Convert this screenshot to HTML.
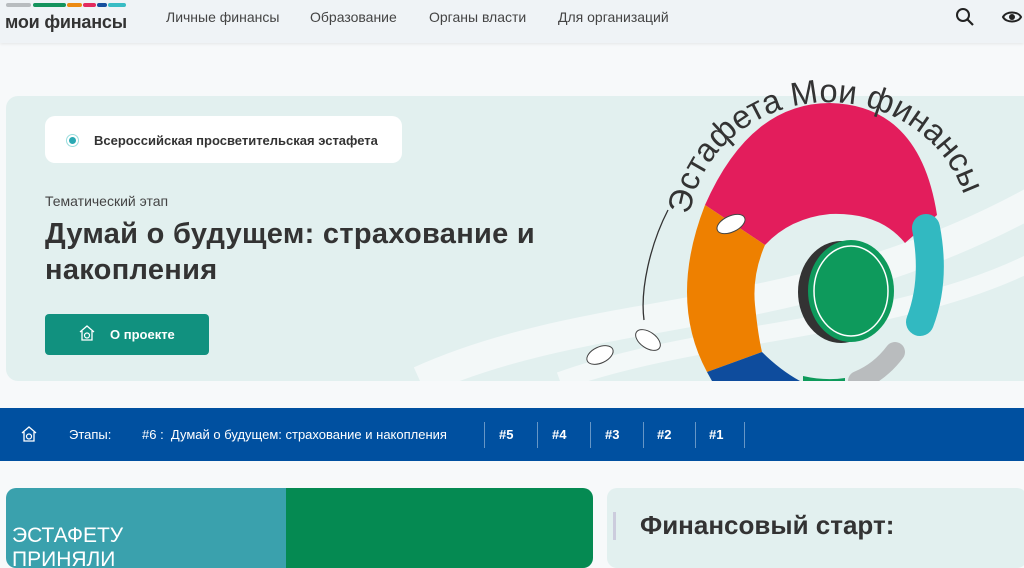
<!DOCTYPE html>
<html><head><meta charset="utf-8"><style>
*{margin:0;padding:0;box-sizing:border-box}
body{width:1024px;height:554px;overflow:hidden;background:#f7f9fa;font-family:"Liberation Sans","DejaVu Sans",sans-serif;position:relative;color:#333}
.hdr{position:absolute;left:0;top:0;width:1024px;height:43px;background:#eff3f6;box-shadow:0 1px 3px rgba(0,0,0,.08)}
.bar{position:absolute;top:3px;height:4px;border-radius:2px}
.logo{position:absolute;left:5px;top:12px;font-size:18px;font-weight:bold;color:#333;letter-spacing:-.2px}
.nav{position:absolute;top:9px;font-size:14px;color:#444}
.card{position:absolute;left:6px;top:96px;width:1030px;height:285px;background:#e2f0ef;border-radius:12px;overflow:hidden}
.pill{position:absolute;left:45px;top:116px;width:357px;height:47px;background:#fff;border-radius:10px}
.blue{position:absolute;left:0;top:408px;width:1024px;height:53px;background:#0050a0;color:#fff;font-size:13px}
.blue span{position:absolute;top:19px}
.sep{position:absolute;top:14px;width:1px;height:26px;background:rgba(255,255,255,.4)}
</style></head><body>
<div class="hdr">
<div class="bar" style="left:6px;width:25px;background:#b8bcbf"></div>
<div class="bar" style="left:33px;width:33px;background:#14935d"></div>
<div class="bar" style="left:67px;width:15px;background:#ec8a12"></div>
<div class="bar" style="left:83px;width:13px;background:#e32a5e"></div>
<div class="bar" style="left:97px;width:10px;background:#164f9e"></div>
<div class="bar" style="left:108px;width:18px;background:#39bcc4"></div>
<div class="logo">мои финансы</div>
<div class="nav" style="left:166px">Личные финансы</div>
<div class="nav" style="left:310px">Образование</div>
<div class="nav" style="left:429px">Органы власти</div>
<div class="nav" style="left:558px">Для организаций</div>
<svg style="position:absolute;left:955px;top:7px" width="20" height="20" viewBox="0 0 20 20"><circle cx="8" cy="8" r="6" fill="none" stroke="#222" stroke-width="2"/><path d="M12.5 12.5L18 18" stroke="#222" stroke-width="2.2"/></svg>
<svg style="position:absolute;left:1001px;top:8px" width="22" height="18" viewBox="0 0 22 18"><path d="M2 9C5 3 17 3 20 9C17 15 5 15 2 9Z" fill="none" stroke="#222" stroke-width="2"/><circle cx="11" cy="9" r="3" fill="#222"/></svg>
</div>
<div class="card">
<svg style="position:absolute;left:0;top:0" width="1030" height="285" viewBox="6 96 1030 285">
<path d="M420 381C600 300 800 330 1036 200" stroke="#f3f8f8" stroke-width="30" fill="none"/>
<path d="M560 381C700 330 900 330 1036 260" stroke="#f3f8f8" stroke-width="18" fill="none"/>
<path d="M705 205Q750 103 830 103Q920 105 937 215L905 243Q880 212 830 214Q790 218 765 245Z" fill="#e31d5c"/>
<path d="M705 205L765 245Q752 275 755 305Q758 335 762 352L707 372Q668 300 705 205Z" fill="#ee8000"/>
<path d="M707 372L762 352Q780 370 800 381L712 381Z" fill="#0e4c9d"/>
<path d="M803 376Q825 381 845 378L845 381L803 381Z" fill="#0d9a5a"/>
<path d="M926 228Q936 280 920 322" stroke="#32b9c1" stroke-width="28" fill="none" stroke-linecap="round"/>
<path d="M895 352Q880 372 858 381" stroke="#b9bcbe" stroke-width="20" fill="none" stroke-linecap="round"/>
<ellipse cx="841" cy="292" rx="43" ry="51" fill="#333"/>
<ellipse cx="851" cy="291" rx="43" ry="51" fill="#0e9a5c"/>
<ellipse cx="851" cy="291" rx="37" ry="45" fill="none" stroke="#fff" stroke-width="1.5"/>
<path d="M668 210C650 245 640 290 644 320" stroke="#333" stroke-width="1.3" fill="none"/>
<ellipse cx="731" cy="224" rx="15" ry="8" transform="rotate(-25 731 224)" fill="#fff" stroke="#444"/>
<ellipse cx="648" cy="340" rx="14" ry="8" transform="rotate(35 648 340)" fill="#fff" stroke="#444"/>
<ellipse cx="600" cy="355" rx="14" ry="8" transform="rotate(-25 600 355)" fill="#fff" stroke="#444"/>
</svg>
</div>
<svg style="position:absolute;left:0;top:0" width="1024" height="300">
<path id="tp" d="M690 215A140 128 0 0 1 968 215" fill="none"/>
<text font-family="Liberation Sans,sans-serif" font-size="33" fill="#333"><textPath href="#tp" textLength="370" lengthAdjust="spacingAndGlyphs">Эстафета Мои финансы</textPath></text>
</svg>
<div class="pill"></div>
<div style="position:absolute;left:66px;top:134px;width:13px;height:13px;border-radius:50%;border:1px solid #9dd;background:#fff"></div>
<div style="position:absolute;left:69px;top:137px;width:7px;height:7px;border-radius:50%;background:#2aa9b3"></div>
<div style="position:absolute;left:94px;top:133px;font-size:13px;font-weight:bold;color:#333">Всероссийская просветительская эстафета</div>
<div style="position:absolute;left:45px;top:193px;font-size:14px;color:#444">Тематический этап</div>
<div style="position:absolute;left:45px;top:216px;font-size:29px;font-weight:bold;color:#333;line-height:36px;width:540px;letter-spacing:.3px">Думай о будущем: страхование и накопления</div>
<div style="position:absolute;left:45px;top:314px;width:164px;height:41px;background:#11917f;border-radius:4px"></div>
<svg style="position:absolute;left:78px;top:324px" width="18" height="18" viewBox="0 0 18 18"><path d="M2 8L9 2L16 8M4 7V16H14V7" fill="none" stroke="#fff" stroke-width="1.3"/><circle cx="9" cy="11.5" r="2.5" fill="none" stroke="#fff" stroke-width="1.2"/></svg>
<div style="position:absolute;left:110px;top:327px;font-size:13px;font-weight:bold;color:#fff">О проекте</div>
<div class="blue">
<svg style="position:absolute;left:20px;top:17px" width="18" height="18" viewBox="0 0 18 18"><path d="M2 8L9 2L16 8M4 7V16H14V7" fill="none" stroke="#fff" stroke-width="1.3"/><circle cx="9" cy="11.5" r="2.5" fill="none" stroke="#fff" stroke-width="1.2"/></svg>
<span style="left:69px">Этапы:</span>
<span style="left:142px">#6 :&nbsp; Думай о будущем: страхование и накопления</span>
<div class="sep" style="left:484px"></div><span style="left:499px;font-weight:bold">#5</span>
<div class="sep" style="left:537px"></div><span style="left:552px;font-weight:bold">#4</span>
<div class="sep" style="left:590px"></div><span style="left:605px;font-weight:bold">#3</span>
<div class="sep" style="left:643px"></div><span style="left:657px;font-weight:bold">#2</span>
<div class="sep" style="left:695px"></div><span style="left:709px;font-weight:bold">#1</span>
<div class="sep" style="left:744px"></div>
</div>
<div style="position:absolute;left:6px;top:488px;width:587px;height:80px;border-radius:10px;overflow:hidden">
<div style="position:absolute;left:0;top:0;width:280px;height:80px;background:#3aa1ad"></div>
<div style="position:absolute;left:280px;top:0;width:307px;height:80px;background:#058a52"></div>
<div style="position:absolute;left:6px;top:36px;font-size:21px;color:#fff;line-height:24px">ЭСТАФЕТУ<br>ПРИНЯЛИ</div>
</div>
<div style="position:absolute;left:607px;top:488px;width:420px;height:80px;background:#e2f0ef;border-radius:10px"></div>
<div style="position:absolute;left:613px;top:512px;width:3px;height:28px;background:#ccd"></div>
<div style="position:absolute;left:640px;top:510px;font-size:26px;font-weight:bold;color:#333">Финансовый старт:</div>
</body></html>
